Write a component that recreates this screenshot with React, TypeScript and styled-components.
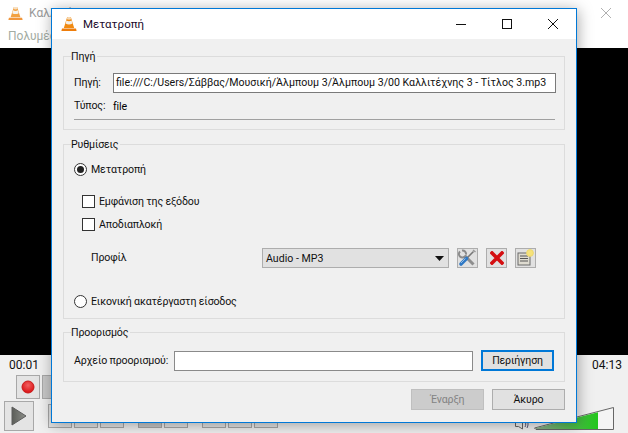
import React from "react";
import styled, { createGlobalStyle } from "styled-components";

const Global = createGlobalStyle`
  html, body { margin: 0; padding: 0; background: #f0f0f0; }
  * { box-sizing: border-box; }
  body { font-family: Roboto, "Noto Sans", "Liberation Sans", sans-serif; font-size: 10.6px; letter-spacing: -0.15px; color: #000; }
`;

const Page = styled.div`
  position: relative;
  width: 628px;
  height: 433px;
  overflow: hidden;
  display: flex;
  flex-direction: column;
  background: #f0f0f0;
`;

/* ---- VLC main window behind the dialog ---- */
const MainTitle = styled.div`
  height: 26px;
  background: #fff;
  display: flex;
  align-items: center;
  padding: 0 17px 0 8px;
  gap: 6px;
  font-size: 12px;
  letter-spacing: 0;
  color: #9a9a9a;
`;
const GhostControls = styled.div`
  display: flex;
  align-items: center;
  gap: 36px;
`;
const Spacer = styled.div`
  flex: 1;
`;
const MainMenu = styled.div`
  height: 22px;
  background: #fff;
  padding: 2px 8px 0;
  font-size: 12px;
  letter-spacing: 0;
  color: #a3aca3;
  line-height: 16px;
`;
const Video = styled.div`
  height: 307px;
  background: #000;
`;
const TimeRow = styled.div`
  height: 20px;
  display: flex;
  justify-content: space-between;
  align-items: center;
  padding: 0 6px 0 9px;
  font-size: 12px;
  letter-spacing: 0;
  color: #111;
`;
const RecordRow = styled.div`
  display: flex;
  gap: 2px;
  height: 26px;
  padding-left: 16px;
`;
const ToolButton = styled.div<{ $w: number; $h: number; $shade?: boolean }>`
  width: ${(p) => p.$w}px;
  height: ${(p) => p.$h}px;
  border: 1px solid #a8a8a8;
  background: ${(p) => (p.$shade ? "#c8c8c8" : "#e4e4e4")};
  display: flex;
  align-items: center;
  justify-content: center;
`;
const TransportRow = styled.div`
  display: flex;
  align-items: flex-start;
  padding-left: 4px;
  height: 32px;
`;
const ButtonGroup = styled.div<{ $left: number }>`
  display: flex;
  gap: 2px;
  margin: 3px 0 0 ${(p) => p.$left}px;
`;
const VolumeArea = styled.div`
  margin-left: auto;
  margin-right: 14px;
  margin-top: 6px;
  display: flex;
  align-items: flex-end;
  gap: 5px;
`;

/* ---- Dialog ---- */
const Dialog = styled.div`
  position: absolute;
  left: 51px;
  top: 8px;
  width: 526px;
  height: 415px;
  border: 1px solid #0078d7;
  background: #f0f0f0;
  box-shadow: 1px 2px 14px rgba(0, 0, 0, 0.35);
  display: flex;
  flex-direction: column;
`;
const TitleBar = styled.div`
  height: 30px;
  flex: none;
  background: #fff;
  display: flex;
  align-items: center;
  padding-left: 9px;
  color: #1a0a2a;
`;
const TitleText = styled.span`
  margin-left: 6px;
  font-size: 11.5px;
  letter-spacing: 0;
`;
const WinButton = styled.div`
  width: 46px;
  height: 30px;
  display: flex;
  align-items: center;
  justify-content: center;
`;
const Body = styled.div`
  flex: 1;
  padding: 9px 11px 0;
  display: flex;
  flex-direction: column;
`;
const Group = styled.fieldset<{ $h: number; $mt?: number }>`
  height: ${(p) => p.$h}px;
  margin: ${(p) => p.$mt ?? 0}px 0 0;
  padding: 0 9px 0 10px;
  border: 1px solid #dcdcdc;
  min-width: 0;
  flex: none;
`;
const Legend = styled.legend`
  margin-left: -3px;
  padding: 0 2px 0 0;
  line-height: 18px;
  height: 16px;
  color: #111;
`;
const Row = styled.div<{ $mt?: number; $ml?: number }>`
  display: flex;
  align-items: center;
  margin-top: ${(p) => p.$mt ?? 0}px;
  margin-left: ${(p) => p.$ml ?? 0}px;
`;
const RowLabel = styled.span<{ $w: number }>`
  width: ${(p) => p.$w}px;
  flex: none;
  color: #111;
  line-height: 16px;
  white-space: nowrap;
`;
const TextField = styled.div<{ $w: number; $dark?: boolean }>`
  width: ${(p) => p.$w}px;
  height: 20px;
  flex: none;
  background: #fff;
  border: 1px solid ${(p) => (p.$dark ? "#7a7a7a" : "#8a8a8a")};
  padding-left: 2px;
  line-height: 18px;
  letter-spacing: 0;
  white-space: nowrap;
  overflow: hidden;
  color: #111;
`;
const Separator = styled.div`
  height: 1px;
  background: #a0a0a0;
  margin-top: 5px;
`;
const OptionRow = styled.div<{ $mt?: number; $ml?: number }>`
  display: flex;
  align-items: center;
  height: 16px;
  margin-top: ${(p) => p.$mt ?? 0}px;
  margin-left: ${(p) => p.$ml ?? 0}px;
  gap: 4px;
  color: #111;
`;
const Radio = styled.span<{ $on?: boolean }>`
  width: 13px;
  height: 13px;
  border-radius: 50%;
  border: 1px solid #333;
  background: #fff;
  display: flex;
  align-items: center;
  justify-content: center;
  &::after {
    content: "";
    display: ${(p) => (p.$on ? "block" : "none")};
    width: 7px;
    height: 7px;
    border-radius: 50%;
    background: #222;
  }
`;
const Check = styled.span`
  width: 13px;
  height: 13px;
  border: 1px solid #333;
  background: #fff;
`;
const Combo = styled.div`
  width: 187px;
  height: 20px;
  margin-left: 133px;
  flex: none;
  background: #e1e1e1;
  border: 1px solid #adadad;
  display: flex;
  align-items: center;
  justify-content: space-between;
  padding: 0 4px 0 3px;
  letter-spacing: 0;
  color: #111;
`;
const IconButton = styled.div`
  width: 21px;
  height: 20px;
  margin-left: 8px;
  flex: none;
  background: #e1e1e1;
  border: 1px solid #adadad;
  display: flex;
  align-items: center;
  justify-content: center;
`;
const PushButton = styled.div<{ $disabled?: boolean; $focus?: boolean; $ml?: number }>`
  width: 73px;
  height: 21px;
  flex: none;
  margin-left: ${(p) => p.$ml ?? 0}px;
  background: ${(p) => (p.$disabled ? "#cccccc" : "#e1e1e1")};
  border: ${(p) => (p.$focus ? "2px solid #0078d7" : p.$disabled ? "1px solid #bfbfbf" : "1px solid #adadad")};
  color: ${(p) => (p.$disabled ? "#838383" : "#111")};
  display: flex;
  align-items: center;
  justify-content: center;
`;
const Footer = styled.div`
  display: flex;
  justify-content: flex-end;
  gap: 8px;
  margin-top: 7px;
`;

/* ---- Drawings ---- */
const Cone = ({ s = 16, faded = false }: { s?: number; faded?: boolean }) => (
  <svg width={s} height={s} viewBox="0 0 16 16" style={{ opacity: faded ? 0.8 : 1 }}>
    <path d="M6.2 1h3.6l3.4 11H2.8z" fill="#f08a12" />
    <path d="M5.4 4.6 C7 5.6 9 5.6 10.6 4.6 L11.4 7.6 C9.4 8.8 6.6 8.8 4.6 7.6z" fill="#f3efe8" />
    <path d="M6.4 1h3.2l.6 2.2c-1.3.6-3.1.6-4.4 0z" fill="#f6d9b3" />
    <path d="M1 12.4h14l.6 2.6H.4z" fill="#ee7d0b" />
  </svg>
);
const Tools = () => (
  <svg width="19" height="18" viewBox="0 0 19 18">
    <path d="M6.500 6.500L15.500 15.500" stroke="#8e8e8e" strokeWidth="3" />
    <path d="M2 2.500a3.500 3.500 0 0 0 5 5 M4 1.500a3.500 3.500 0 0 1 4 4" fill="none" stroke="#8a8a8a" strokeWidth="2" />
    <path d="M15.500 2.500L9 9" stroke="#777" strokeWidth="1.500" />
    <path d="M15 1l2.500 2" stroke="#999" strokeWidth="1.500" />
    <path d="M8.500 9.500L3 15" stroke="#2f78c4" strokeWidth="3.600" strokeLinecap="round" />
    <path d="M7.500 9.500L3 14" stroke="#8fbbe6" strokeWidth="1" />
  </svg>
);
const RedX = () => (
  <svg width="14" height="14" viewBox="0 0 14 14">
    <path d="M2 2l10 10M12 2L2 12" stroke="#d40f12" strokeWidth="3.600" strokeLinecap="square" />
  </svg>
);
const NoteIcon = () => (
  <svg width="19" height="18" viewBox="0 0 19 18">
    <rect x="2" y="4" width="12" height="12" fill="#dedbd0" stroke="#6a6a6a" />
    <path d="M4 7h8M4 9.500h8M4 12h8" stroke="#555" strokeWidth="1" />
    <circle cx="14" cy="4" r="3.400" fill="#f6e27a" stroke="#ecd870" />
  </svg>
);
const Arrow = () => (
  <svg width="9" height="5" viewBox="0 0 9 5">
    <path d="M0 0h9L4.500 5z" fill="#111" />
  </svg>
);
const Minimize = () => (
  <svg width="10" height="10" viewBox="0 0 10 10"><path d="M0 5.500h10" stroke="#111" /></svg>
);
const Maximize = ({ c = "#111" }: { c?: string }) => (
  <svg width="10" height="10" viewBox="0 0 10 10"><rect x="0.500" y="0.500" width="9" height="9" fill="none" stroke={c} /></svg>
);
const CloseGlyph = ({ c = "#111" }: { c?: string }) => (
  <svg width="10" height="10" viewBox="0 0 10 10"><path d="M0 0l10 10M10 0L0 10" stroke={c} /></svg>
);
const RecordDot = () => (
  <svg width="14" height="14" viewBox="0 0 14 14">
    <defs>
      <radialGradient id="rec" cx="50%" cy="35%" r="65%">
        <stop offset="0" stopColor="#f26060" />
        <stop offset="1" stopColor="#d90f12" />
      </radialGradient>
    </defs>
    <circle cx="7" cy="7" r="6" fill="url(#rec)" stroke="#c81a1a" />
  </svg>
);
const PlayGlyph = () => (
  <svg width="16" height="20" viewBox="0 0 16 20">
    <defs>
      <linearGradient id="pl" x1="0" y1="0" x2="1" y2="0">
        <stop offset="0" stopColor="#5b5d58" />
        <stop offset="1" stopColor="#8d8f8a" />
      </linearGradient>
    </defs>
    <path d="M1 1l14 9-14 9z" fill="url(#pl)" stroke="#5c5c5c" />
  </svg>
);
const Speaker = () => (
  <svg width="14" height="11" viewBox="0 0 14 11">
    <path d="M0.500 2.500h3l4-2.500v10l-4-2.500h-3z" fill="none" stroke="#666" />
    <path d="M10 2c1 2 1 4 0 6M12 1c1.400 2.600 1.400 5.400 0 8" fill="none" stroke="#557" />
  </svg>
);
const Volume = () => (
  <svg width="80" height="23" viewBox="0 0 80 23">
    <defs>
      <linearGradient id="vol" x1="0" y1="0" x2="1" y2="0">
        <stop offset="0" stopColor="#8dad8d" />
        <stop offset="1" stopColor="#22c71c" />
      </linearGradient>
    </defs>
    <path d="M0.500 21L79.500 0.500V22.500H2z" fill="#f4f4f4" stroke="#666" />
    <path d="M2 21L64 5.200V22H2z" fill="url(#vol)" />
  </svg>
);

const groups: { left: number; items: number[] }[] = [
  { left: 14, items: [0, 0, 0] },
  { left: 14, items: [1, 0] },
  { left: 14, items: [0, 0, 0] },
];

export default function App() {
  return (
    <Page>
      <Global />
      <MainTitle>
        <Cone s={15} faded />
        <span>Καλλιτέχνης</span>
        <Spacer />
        <GhostControls>
          <Maximize c="#a8a8a8" />
          <CloseGlyph c="#b0b0b0" />
        </GhostControls>
      </MainTitle>
      <MainMenu>Πολυμέσα</MainMenu>
      <Video />
      <TimeRow>
        <span>00:01</span>
        <span>04:13</span>
      </TimeRow>
      <RecordRow>
        <ToolButton $w={24} $h={24}><RecordDot /></ToolButton>
        <ToolButton $w={24} $h={24} $shade />
      </RecordRow>
      <TransportRow>
        <ToolButton $w={30} $h={30}><PlayGlyph /></ToolButton>
        {groups.map((g, i) => (
          <ButtonGroup key={i} $left={g.left}>
            {g.items.map((shade, j) => (
              <ToolButton key={j} $w={24} $h={24} $shade={!!shade} />
            ))}
          </ButtonGroup>
        ))}
        <VolumeArea>
          <Speaker />
          <Volume />
        </VolumeArea>
      </TransportRow>

      <Dialog>
        <TitleBar>
          <Cone s={16} />
          <TitleText>Μετατροπή</TitleText>
          <Spacer />
          <WinButton><Minimize /></WinButton>
          <WinButton><Maximize /></WinButton>
          <WinButton><CloseGlyph /></WinButton>
        </TitleBar>
        <Body>
          <Group $h={82}>
            <Legend>Πηγή</Legend>
            <Row $mt={9}>
              <RowLabel $w={39}>Πηγή:</RowLabel>
              <TextField $w={443} $dark>file:///C:/Users/Σάββας/Μουσική/Άλμπουμ 3/Άλμπουμ 3/00 Καλλιτέχνης 3 - Τίτλος 3.mp3</TextField>
            </Row>
            <Row $mt={5}>
              <RowLabel $w={39}>Τύπος:</RowLabel>
              <span>file</span>
            </Row>
            <Separator />
          </Group>
          <Group $h={183} $mt={6}>
            <Legend>Ρυθμίσεις</Legend>
            <OptionRow $mt={9}>
              <Radio $on />
              <span>Μετατροπή</span>
            </OptionRow>
            <OptionRow $mt={16} $ml={8}>
              <Check />
              <span>Εμφάνιση της εξόδου</span>
            </OptionRow>
            <OptionRow $mt={7} $ml={8}>
              <Check />
              <span>Αποδιαπλοκή</span>
            </OptionRow>
            <Row $mt={16} $ml={17}>
              <RowLabel $w={38}>Προφίλ</RowLabel>
              <Combo>
                <span>Audio - MP3</span>
                <Arrow />
              </Combo>
              <IconButton><Tools /></IconButton>
              <IconButton><RedX /></IconButton>
              <IconButton><NoteIcon /></IconButton>
            </Row>
            <OptionRow $mt={25}>
              <Radio />
              <span>Εικονική ακατέργαστη είσοδος</span>
            </OptionRow>
          </Group>
          <Group $h={58} $mt={5}>
            <Legend>Προορισμός</Legend>
            <Row $mt={10}>
              <RowLabel $w={100}>Αρχείο προορισμού:</RowLabel>
              <TextField $w={299} />
              <PushButton $focus $ml={8}>Περιήγηση</PushButton>
            </Row>
          </Group>
          <Footer>
            <PushButton $disabled>Έναρξη</PushButton>
            <PushButton>Άκυρο</PushButton>
          </Footer>
        </Body>
      </Dialog>
    </Page>
  );
}
